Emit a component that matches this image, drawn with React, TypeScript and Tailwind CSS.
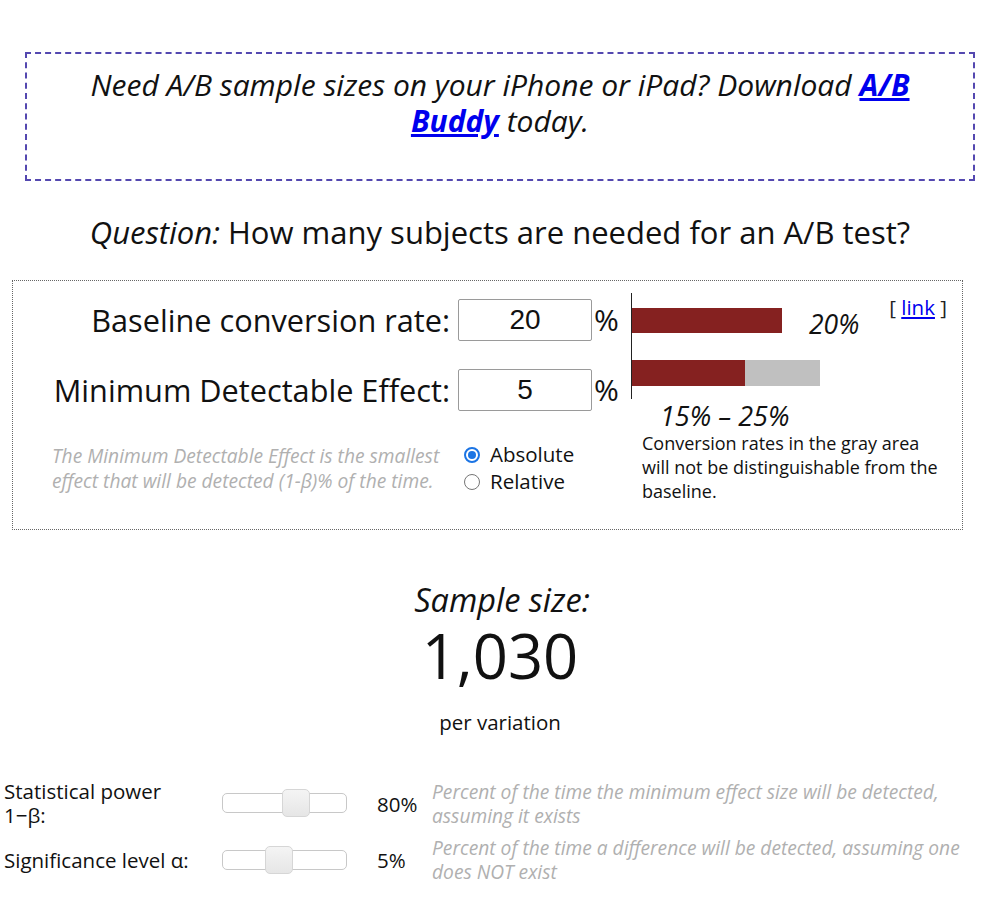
import React from "react";

const SANS = { fontFamily: '"Open Sans", "Noto Sans", sans-serif' };

function Slider({ thumbLeft }: { thumbLeft: number }) {
  return (
    <div className="relative w-[125px] h-[28px] flex items-center">
      <div className="w-[125px] h-[20px] rounded-[5px] border border-[#c8c8c8] bg-white" />
      <div
        className="absolute top-0 w-[28px] h-[28px] rounded-[5px] border border-[#d6d6d6] bg-gradient-to-b from-[#f4f4f4] to-[#e6e6e6]"
        style={{ left: thumbLeft }}
      />
    </div>
  );
}

export default function App() {
  return (
    <div className="w-[982px] min-h-[900px] bg-white text-black" style={SANS}>
      {/* Banner */}
      <div className="pt-[52px] pl-[25px]">
        <div className="w-[950px] h-[129px] border-2 border-dashed border-[#5448b0] flex items-center justify-center">
          <p className="text-center italic text-[30px] leading-[36px] text-[#111] mt-[-28px]">
            Need A/B sample sizes on your iPhone or iPad? Download{" "}
            <a href="#" className="font-bold text-[#0000ee] underline">
              A/B
            </a>
            <br />
            <a href="#" className="font-bold text-[#0000ee] underline">
              Buddy
            </a>{" "}
            today.
          </p>
        </div>
      </div>

      {/* Question */}
      <div className="mt-[31px] pl-[18px] text-center text-[31px] leading-[40px] text-[#111]">
        <span className="italic">Question:</span> How many subjects are needed for an A/B test?
      </div>

      {/* Panel */}
      <div className="mt-[28px] mx-[12px] w-[951px] h-[250px] border border-dotted border-[#666] flex relative">
        {/* Left */}
        <div className="w-[618px] flex flex-col pt-[18px]">
          <div className="flex items-center h-[41px]">
            <div className="w-[437px] text-right text-[30.7px] leading-[40px] text-[#111] whitespace-nowrap">Baseline conversion rate:</div>
            <div className="ml-[8px] w-[134px] h-[42px] border border-[#9a9a9a] rounded-[2px] flex items-center justify-center text-[28px] text-[#111]" style={{ fontFamily: '"Liberation Sans", Arial, sans-serif' }}>
              20
            </div>
            <div className="ml-[2px] text-[30px] text-[#111]">%</div>
          </div>
          <div className="flex items-center h-[41px] mt-[29px]">
            <div className="w-[437px] text-right text-[30.7px] leading-[40px] text-[#111] whitespace-nowrap">Minimum Detectable Effect:</div>
            <div className="ml-[8px] w-[134px] h-[42px] border border-[#9a9a9a] rounded-[2px] flex items-center justify-center text-[28px] text-[#111]" style={{ fontFamily: '"Liberation Sans", Arial, sans-serif' }}>
              5
            </div>
            <div className="ml-[2px] text-[30px] text-[#111]">%</div>
          </div>
          <div className="flex mt-[33px]">
            <div className="ml-[39px] w-[405px] italic text-[19.2px] leading-[25px] text-[#b0b0b0] whitespace-nowrap">
              The Minimum Detectable Effect is the smallest
              <br />
              effect that will be detected (1-β)% of the time.
            </div>
            <div className="ml-[7px] flex flex-col text-[20.5px] leading-[27px] text-[#111] mt-[-2px]">
              <div className="flex items-center">
                <span className="w-[16px] h-[16px] rounded-full border-[2px] border-[#1b74e4] bg-white flex items-center justify-center">
                  <span className="w-[8px] h-[8px] rounded-full bg-[#1b74e4]" />
                </span>
                <span className="ml-[10px]">Absolute</span>
              </div>
              <div className="flex items-center">
                <span className="w-[16px] h-[16px] rounded-full border border-[#767676] bg-white" />
                <span className="ml-[10px]">Relative</span>
              </div>
            </div>
          </div>
        </div>

        {/* Right chart */}
        <div className="flex flex-col pt-[12px]">
          <div className="flex">
            <div className="w-[190px] h-[106px] border-l border-[#222] flex flex-col pt-[15px]">
              <div className="w-[150px] h-[25px] bg-[#852120]" />
              <div className="flex mt-[27px]">
                <div className="w-[113px] h-[26px] bg-[#852120]" />
                <div className="w-[75px] h-[26px] bg-[#c0c0c0]" />
              </div>
            </div>
            <div className="ml-[-12px] mt-[15px] italic text-[26.5px] leading-[32px] text-[#111]">20%</div>
          </div>
          <div className="ml-[29px] mt-[2px] italic text-[27px] leading-[30px] text-[#111] whitespace-nowrap">15% – 25%</div>
          <div className="ml-[11px] mt-[0px] text-[18px] leading-[24px] text-[#111] w-[320px] whitespace-nowrap">
            Conversion rates in the gray area
            <br />
            will not be distinguishable from the
            <br />
            baseline.
          </div>
        </div>

        <div className="absolute right-[15px] top-[13px] text-[20.5px] leading-[26px] text-[#222]">
          [ <a href="#" className="text-[#0000ee] underline">link</a> ]
        </div>
      </div>

      {/* Sample size */}
      <div className="mt-[49px] pl-[18px] flex flex-col items-center text-[#111]">
        <div className="italic text-[32.5px] leading-[42px] ml-[4px]">Sample size:</div>
        <div className="text-[61.5px] leading-[72px] mt-[-2px]">1,030</div>
        <div className="text-[20.5px] leading-[28px] mt-[17px]">per variation</div>
      </div>

      {/* Parameters */}
      <div className="mt-[43px] pl-[4px] flex flex-col text-[#111]">
        <div className="flex">
          <div className="w-[218px] text-[20.5px] leading-[24px]">
            Statistical power
            <br />
            1−β:
          </div>
          <div className="pt-[10px]">
            <Slider thumbLeft={60} />
          </div>
          <div className="w-[85px] pl-[30px] pt-[13px] text-[20.5px] leading-[24px]">80%</div>
          <div className="italic text-[19.2px] leading-[24px] text-[#b0b0b0] whitespace-nowrap pt-[1px]">
            Percent of the time the minimum effect size will be detected,
            <br />
            assuming it exists
          </div>
        </div>
        <div className="flex mt-[8px]">
          <div className="w-[218px] text-[20.5px] leading-[24px] pt-[12px] whitespace-nowrap">Significance level α:</div>
          <div className="pt-[10px]">
            <Slider thumbLeft={43} />
          </div>
          <div className="w-[85px] pl-[30px] pt-[12px] text-[20.5px] leading-[24px]">5%</div>
          <div className="italic text-[19.2px] leading-[24px] text-[#b0b0b0] whitespace-nowrap">
            Percent of the time a difference will be detected, assuming one
            <br />
            does NOT exist
          </div>
        </div>
      </div>
    </div>
  );
}
